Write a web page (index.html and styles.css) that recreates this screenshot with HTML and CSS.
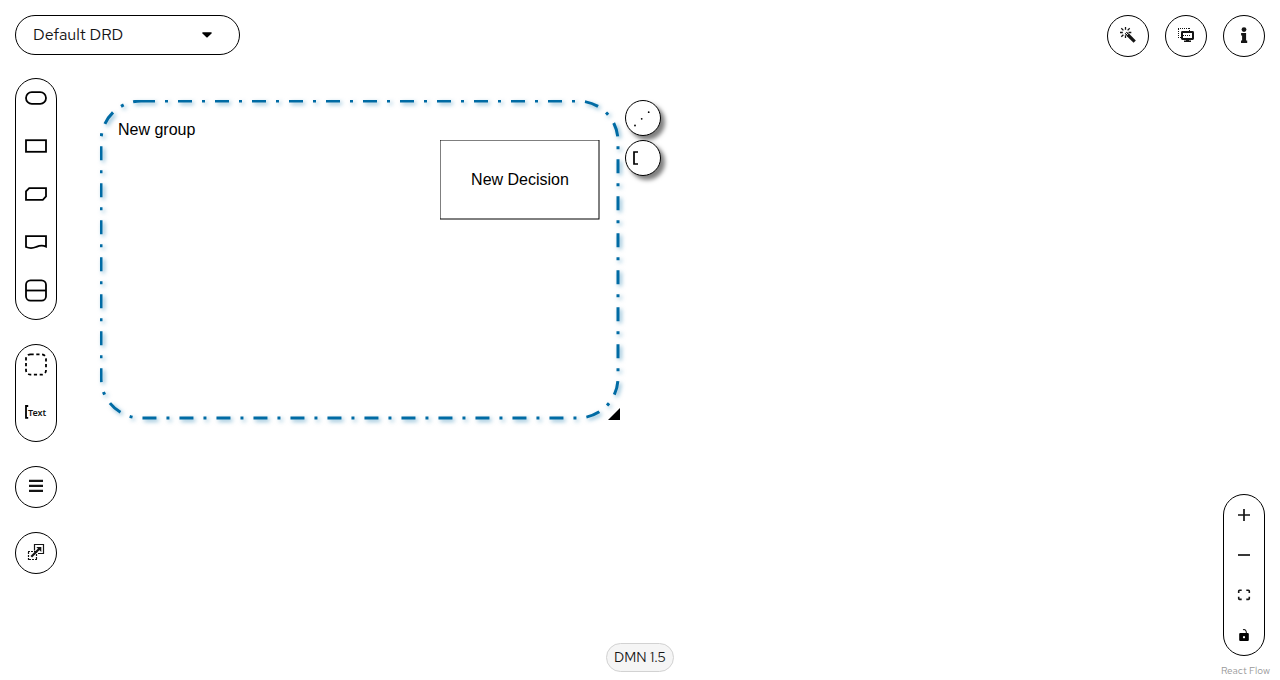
FILE: index.html
```html
<!DOCTYPE html>
<html lang="en">
<head>
<meta charset="utf-8">
<title>DMN Editor</title>
<meta name="viewport" content="width=device-width, initial-scale=1">
<link rel="stylesheet" href="styles.css">
</head>
<body>
<main class="editor">
  <section class="canvas" aria-label="Diagram">
    <div class="node group-node">
      <svg class="group-shape" viewBox="0 0 520 320" aria-hidden="true"><rect x="1" y="1" width="517" height="317" rx="40" ry="40"/></svg>
      <span class="group-label">New group</span>
      <svg class="resize-handle" viewBox="0 0 12 12" aria-hidden="true"><path d="M12 0V12H0Z"/></svg>
    </div>
    <div class="node decision-node">
      <svg class="decision-shape" viewBox="0 0 160 80" aria-hidden="true"><rect width="159" height="79"/></svg>
      <span class="decision-label">New Decision</span>
    </div>
    <div class="node node-actions">
      <button class="node-action" aria-label="Add association"><svg viewBox="0 0 34 34"><g class="solid"><circle cx="9" cy="24.500" r=".9"/><circle cx="15.700" cy="17.800" r=".9"/><circle cx="22.700" cy="11.200" r=".9"/></g></svg></button>
      <button class="node-action" aria-label="Add text annotation"><svg viewBox="0 0 34 34"><path class="line" d="M12 11H8V23H12"/></svg></button>
    </div>
  </section>

  <header class="topbar">
    <label class="drd-picker">
      <select aria-label="DRD"><option>Default DRD</option></select>
      <svg viewBox="0 0 10 6" aria-hidden="true"><path d="M.6 .3H9.400Q10 .8 9.500 1.400L5.600 5.300Q5 5.800 4.400 5.300L.5 1.400Q0 .8 .6 .3Z"/></svg>
    </label>
    <div class="tools">
      <button class="round" aria-label="Autolayout"><svg viewBox="0 0 16 16"><path d="M8 7L14.700 13.700" stroke="#151515" stroke-width="3.200"/><path d="M5.800 4.800L8.500 7.500" stroke="#151515" stroke-width="2.800"/><path d="M5.400 4.400L7.800 6.800" stroke="#fff" stroke-width="1"/><path d="M5.500 -1V1.800M1.300 .3L3.400 2.400M0 4.500H2.800M1.300 8.800L3.400 6.700M5.500 7.200V10M9.700 .3L7.600 2.400M8.500 4.500H11.300" stroke="#151515" stroke-width="1.300" fill="none"/></svg></button>
      <button class="round" aria-label="Overlays"><svg viewBox="0 0 16 16"><path d="M.5 10V1M0 .5H12M11.500 0V3M0 9.500H3" fill="none" stroke="#151515" stroke-dasharray="1 1"/><rect x="4" y="4" width="11" height="7" rx=".4" fill="none" stroke="#151515" stroke-width="2"/><path d="M5 7.500H12" fill="none" stroke="#151515" stroke-dasharray="1 1"/><path d="M8 11.500H11V12.500H13V14H6V12.500H8Z"/></svg></button>
      <button class="round" aria-label="Properties"><svg viewBox="0 0 16 16"><circle cx="8" cy="1.600" r="2.400"/><path d="M5.100 5H10.100V12.500H11.200V15H5V12.500H6.100V7.500H5.100Z"/></svg></button>
    </div>
  </header>

  <nav class="palette-column" aria-label="Palette">
    <div class="palette">
      <button aria-label="Input data"><svg class="outline" viewBox="0 0 24 24"><rect x="2" y="6.200" width="20" height="11.600" rx="5.800"/></svg></button>
      <button aria-label="Decision"><svg class="outline" viewBox="0 0 24 24"><rect x="2" y="6.200" width="20" height="11.600"/></svg></button>
      <button aria-label="Business knowledge model"><svg class="outline" viewBox="0 0 24 24"><path d="M5.200 6.200H22V14.500L18.800 17.800H2V9.400Z"/></svg></button>
      <button aria-label="Knowledge source"><svg class="outline" viewBox="0 0 24 24"><path d="M2 6.200H22V16.600C17.500 14.600 15 15.800 12 17C9 18.300 5 18.300 2 17Z"/></svg></button>
      <button aria-label="Decision service"><svg class="outline" viewBox="0 0 24 24"><rect x="2" y="2.300" width="20" height="20.400" rx="4.500"/><path d="M2 12.500H22"/></svg></button>
    </div>
    <div class="palette">
      <button aria-label="Group"><svg class="outline" viewBox="0 0 24 24"><rect class="dashes" x="2" y="2.300" width="20" height="20.400" rx="4.500"/></svg></button>
      <button aria-label="Text annotation"><svg class="outline" viewBox="0 0 24 24"><path d="M4.200 6H2V17.800H4.200"/><text class="icon-text" x="4" y="16">Text</text></svg></button>
    </div>
    <button class="round" aria-label="DRG nodes"><svg viewBox="0 0 16 16"><path d="M1 .8H15V3H1ZM1 5.800H15V8H1ZM1 10.800H15V13H1Z"/></svg></button>
    <button class="round" aria-label="External nodes"><svg viewBox="0 0 16 16"><path d="M6.500 5.500V-.5H15.500V8.500H10" fill="none" stroke="#151515" stroke-width="1.200"/><path d="M0 6.500H9M8.500 6V15M9 14.500H0M.5 15V6" fill="none" stroke="#151515" stroke-width="1.200" stroke-dasharray="2 1"/><path d="M3.300 11.700L11.500 3.500" stroke="#151515" stroke-width="2.200"/><path d="M8.300 2H13.300V7Z"/></svg></button>
  </nav>

  <div class="version">DMN 1.5</div>

  <aside class="view-column">
    <div class="controls">
      <button aria-label="Zoom in"><svg viewBox="0 0 12 12"><path d="M6 0V12M0 6H12" stroke="#151515" stroke-width="1.700"/></svg></button>
      <button aria-label="Zoom out"><svg viewBox="0 0 12 12"><path d="M0 6H12" stroke="#151515" stroke-width="1.700"/></svg></button>
      <button aria-label="Fit view"><svg viewBox="0 0 12 12"><path d="M.7 4V2Q.7 1.200 1.500 1.200H3.700M8.300 1.200H10.500Q11.300 1.200 11.300 2V4M11.300 7.800V9.600Q11.300 10.400 10.500 10.400H8.300M3.700 10.400H1.500Q.7 10.400 .7 9.600V7.800" fill="none" stroke="#151515" stroke-width="1.600"/></svg></button>
      <button aria-label="Toggle interactivity"><svg viewBox="0 0 12 12"><path d="M2.300 4H9.700Q10.800 4 10.800 5.100V10.900Q10.800 12 9.700 12H2.300Q1.200 12 1.200 10.900V5.100Q1.200 4 2.300 4ZM6 7A1.100 1.100 0 1 0 6.010 7Z" fill-rule="evenodd"/><path d="M5 .7C7 0 8.400 1.300 8.400 4.300" fill="none" stroke="#151515" stroke-width="1.100"/></svg></button>
    </div>
    <a class="attribution" href="#">React Flow</a>
  </aside>
</main>
</body>
</html>
```
FILE: styles.css
```css
* { box-sizing: border-box; }

body {
  margin: 0;
  background: #fff;
  color: #151515;
  font-family: "Red Hat Text", Inter, "Liberation Sans", sans-serif;
  font-size: 16px;
}

button {
  margin: 0;
  padding: 0;
  border: 0;
  background: none;
  color: inherit;
  font: inherit;
  cursor: pointer;
}

svg { display: block; overflow: visible; }

.editor {
  position: relative;
  display: grid;
  grid-template-columns: 1fr auto 1fr;
  grid-template-rows: auto 1fr;
  row-gap: 21px;
  min-height: 100vh;
  padding: 15px 15px 2px;
}

.topbar,
.palette-column,
.version,
.view-column { z-index: 1; }

/* top bar */
.topbar {
  grid-column: 1 / -1;
  display: flex;
  justify-content: space-between;
  align-items: flex-start;
}

.drd-picker {
  display: grid;
  grid-template-columns: 1fr auto;
  align-items: center;
  width: 225px;
}

.drd-picker select {
  grid-area: 1 / 1 / 2 / 3;
  height: 40px;
  padding: 0 40px 2px 17px;
  border: 1px solid #000;
  border-radius: 20px;
  appearance: none;
  background: #fff;
  color: #151515;
  font: inherit;
}

.drd-picker svg {
  grid-area: 1 / 2;
  width: 10px;
  margin-right: 28px;
  pointer-events: none;
}

.tools { display: flex; gap: 16px; }

.round {
  display: grid;
  place-items: center;
  width: 42px;
  height: 42px;
  border: 1px solid #000;
  border-radius: 50%;
  background: #fff;
}

.round svg { width: 16px; fill: #151515; }

/* left palettes */
.palette-column {
  display: flex;
  flex-direction: column;
  align-items: flex-start;
  gap: 24px;
}

.palette {
  display: flex;
  flex-direction: column;
  gap: 10px;
  width: 42px;
  padding-bottom: 10px;
  border: 1px solid #000;
  border-radius: 21px;
  background: #fff;
}

.palette button {
  display: grid;
  place-items: center;
  height: 38px;
}

.palette svg { width: 24px; }

.outline { fill: none; stroke: #000; stroke-width: 1.8; }

.dashes { stroke-dasharray: 3.2 2.6; }

.icon-text {
  fill: #151515;
  stroke: none;
  font: 600 9px "Noto Sans", sans-serif;
}

/* bottom */
.version {
  align-self: end;
  margin-bottom: 6px;
  padding: 0 7px;
  border: 1px solid #d2d2d2;
  border-radius: 15px;
  background: #f5f5f5;
  font-size: 14px;
  line-height: 27px;
}

.view-column {
  display: flex;
  flex-direction: column;
  align-items: flex-end;
  justify-content: flex-end;
  gap: 8px;
}

.controls {
  display: flex;
  flex-direction: column;
  width: 42px;
  border: 1px solid #000;
  border-radius: 21px;
  background: #fff;
}

.controls button {
  display: grid;
  place-items: center;
  height: 40px;
}

.controls svg { width: 12px; fill: #000; }

.attribution {
  margin-right: -5px;
  color: #999;
  font-size: 10px;
  line-height: 14px;
  text-decoration: none;
}

/* diagram */
.canvas {
  position: absolute;
  inset: 0;
  overflow: hidden;
  color: #000;
  font-family: "Liberation Sans", Arial, sans-serif;
}

.node { position: absolute; }

.group-node { left: 100px; top: 100px; width: 520px; height: 320px; }

.group-shape {
  overflow: hidden;
  fill: none;
  stroke: #006ba4;
  stroke-width: 3;
  stroke-dasharray: 14 10 3 10;
  filter: drop-shadow(2px 2px 2px rgba(0, 107, 164, 0.5));
}

.group-label {
  position: absolute;
  left: 18px;
  top: 20px;
  line-height: 20px;
}

.resize-handle {
  position: absolute;
  right: 0;
  bottom: 0;
  width: 12px;
}

.decision-node {
  left: 440px;
  top: 140px;
  display: grid;
  place-items: center;
  width: 160px;
  height: 80px;
}

.decision-shape,
.decision-label { grid-area: 1 / 1; }

.decision-shape {
  width: 160px;
  overflow: hidden;
  fill: #fff;
  stroke: #000;
}

.decision-label { z-index: 1; }

.node-actions {
  left: 625px;
  top: 100px;
  display: flex;
  flex-direction: column;
  gap: 4px;
}

.node-action {
  width: 36px;
  height: 36px;
  border: 1px solid #000;
  border-radius: 50%;
  background: #fff;
  box-shadow: 4px 4px 4px rgba(0, 0, 0, 0.5);
}

.solid { fill: #000; }

.line { fill: none; stroke: #000; stroke-width: 1.7; }
```
